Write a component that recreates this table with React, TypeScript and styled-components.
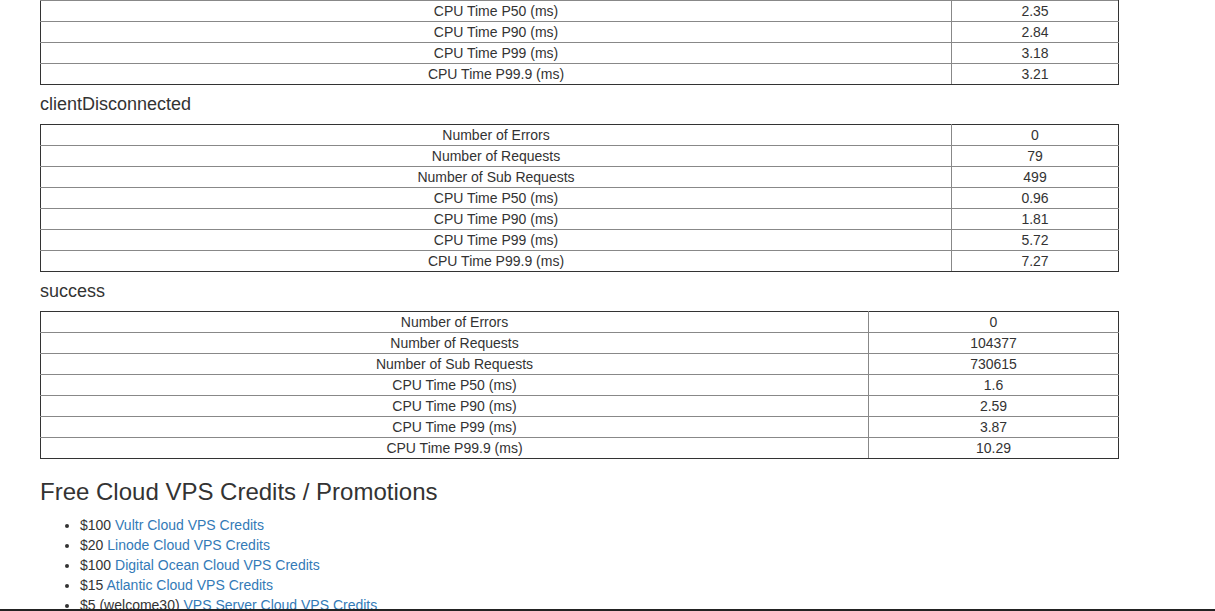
import React from "react";
import styled, { createGlobalStyle } from "styled-components";

const Global = createGlobalStyle`
  html, body { margin: 0; padding: 0; background: #fff; }
  body {
    font-family: "Liberation Sans", Arial, Helvetica, sans-serif;
    font-size: 14px;
    line-height: 20px;
    color: #333;
  }
`;

const Page = styled.div`
  padding: 0 97px 0 40px;
  display: flex;
  flex-direction: column;
`;

const Table = styled.table<{ $continued?: boolean }>`
  width: 1079px;
  border-collapse: collapse;
  table-layout: fixed;

  td:first-child { border-left-color: #333; }
  td:last-child { border-right-color: #333; }
  tr:last-child td { border-bottom-color: #333; }
  tr:first-child td { border-top-color: ${(p) => (p.$continued ? "#888" : "#333")}; }
`;

const Cell = styled.td`
  border: 1px solid #888;
  padding: 0;
  height: 20px;
  line-height: 20px;
  text-align: center;
  font-size: 14px;
  color: #333;
  white-space: nowrap;
`;

const SectionTitle = styled.h4`
  margin: 10px 0;
  font-size: 18px;
  line-height: 19px;
  font-weight: 400;
  color: #333;
`;

const PromoTitle = styled.h3`
  margin: 20px 0 10px;
  font-size: 24px;
  line-height: 26px;
  font-weight: 400;
  color: #333;
`;

const List = styled.ul`
  margin: 0 0 10px;
  padding-left: 40px;
`;

const Item = styled.li`
  line-height: 20px;
`;

const Link = styled.a`
  color: #337ab7;
  text-decoration: none;
`;

const BottomEdge = styled.div`
  position: fixed;
  left: 0;
  right: 0;
  bottom: 0;
  height: 2px;
  background: #222;
`;

type Row = [string, string];

const StatTable: React.FC<{ rows: Row[]; firstCol: number; continued?: boolean }> = ({
  rows,
  firstCol,
  continued,
}) => (
  <Table $continued={continued}>
    <colgroup>
      <col style={{ width: firstCol }} />
      <col />
    </colgroup>
    <tbody>
      {rows.map(([k, v]) => (
        <tr key={k}>
          <Cell>{k}</Cell>
          <Cell>{v}</Cell>
        </tr>
      ))}
    </tbody>
  </Table>
);

const top: Row[] = [
  ["CPU Time P50 (ms)", "2.35"],
  ["CPU Time P90 (ms)", "2.84"],
  ["CPU Time P99 (ms)", "3.18"],
  ["CPU Time P99.9 (ms)", "3.21"],
];

const disconnected: Row[] = [
  ["Number of Errors", "0"],
  ["Number of Requests", "79"],
  ["Number of Sub Requests", "499"],
  ["CPU Time P50 (ms)", "0.96"],
  ["CPU Time P90 (ms)", "1.81"],
  ["CPU Time P99 (ms)", "5.72"],
  ["CPU Time P99.9 (ms)", "7.27"],
];

const success: Row[] = [
  ["Number of Errors", "0"],
  ["Number of Requests", "104377"],
  ["Number of Sub Requests", "730615"],
  ["CPU Time P50 (ms)", "1.6"],
  ["CPU Time P90 (ms)", "2.59"],
  ["CPU Time P99 (ms)", "3.87"],
  ["CPU Time P99.9 (ms)", "10.29"],
];

const promos: [string, string][] = [
  ["$100", "Vultr Cloud VPS Credits"],
  ["$20", "Linode Cloud VPS Credits"],
  ["$100", "Digital Ocean Cloud VPS Credits"],
  ["$15", "Atlantic Cloud VPS Credits"],
  ["$5 (welcome30)", "VPS Server Cloud VPS Credits"],
];

export default function App() {
  return (
    <>
      <Global />
      <Page>
        <StatTable rows={top} firstCol={911} continued />
        <SectionTitle>clientDisconnected</SectionTitle>
        <StatTable rows={disconnected} firstCol={911} />
        <SectionTitle>success</SectionTitle>
        <StatTable rows={success} firstCol={828} />
        <PromoTitle>Free Cloud VPS Credits / Promotions</PromoTitle>
        <List>
          {promos.map(([p, l]) => (
            <Item key={l}>
              {p} <Link href="#">{l}</Link>
            </Item>
          ))}
        </List>
      </Page>
      <BottomEdge />
    </>
  );
}
